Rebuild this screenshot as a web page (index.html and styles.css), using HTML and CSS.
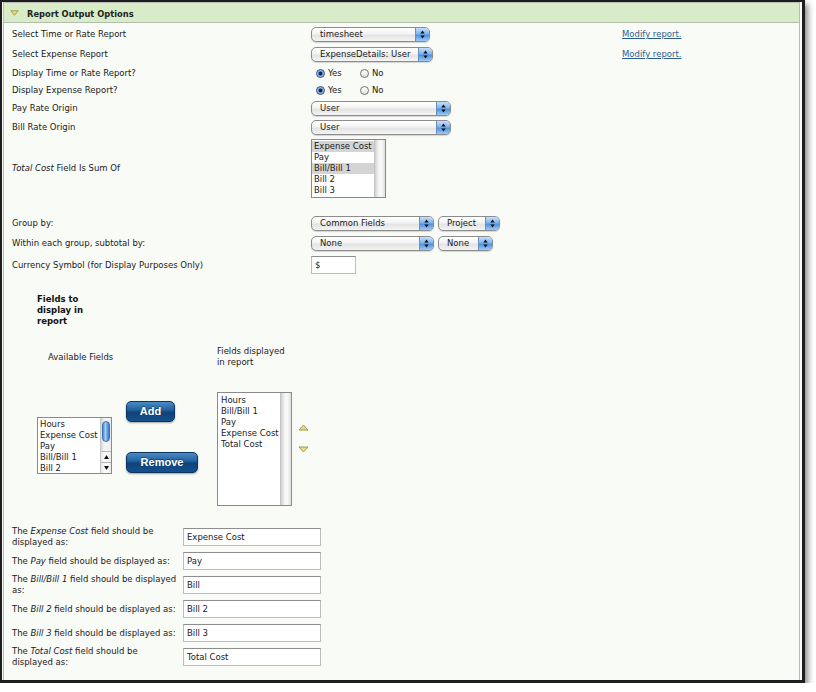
FILE: index.html
```html
<!DOCTYPE html>
<html>
<head>
<meta charset="utf-8">
<title>Report Output Options</title>
<link rel="stylesheet" href="styles.css">
</head>
<body>
<div class="frame">
  <div class="panel">
    <div class="hdr">
      <svg class="hdr-tri" width="9" height="6" viewBox="0 0 9 6"><path d="M0.8 0.8 L8.2 0.8 L4.5 5.2 Z" fill="#e6de8c" stroke="#a39a48" stroke-width="1" stroke-linejoin="round"/></svg>
      <span class="hdr-title">Report Output Options</span>
    </div>

    <div class="rows">
    <div class="row h21">
      <div class="lbl">Select Time or Rate Report</div>
      <div class="ctl">
        <div class="sel w119"><span class="sel-t">timesheet</span><span class="sel-a"><svg width="5" height="9" viewBox="0 0 5 9"><path d="M2.5 0.5 L4.7 3.5 L0.3 3.5Z M0.3 5.5 L4.7 5.5 L2.5 8.5Z" fill="#111"/></svg></span></div>
      </div>
      <a class="lnk" href="#">Modify report.</a>
    </div>

    <div class="row h19">
      <div class="lbl">Select Expense Report</div>
      <div class="ctl">
        <div class="sel w122"><span class="sel-t">ExpenseDetails: User</span><span class="sel-a"><svg width="5" height="9" viewBox="0 0 5 9"><path d="M2.5 0.5 L4.7 3.5 L0.3 3.5Z M0.3 5.5 L4.7 5.5 L2.5 8.5Z" fill="#111"/></svg></span></div>
      </div>
      <a class="lnk" href="#">Modify report.</a>
    </div>

    <div class="row h18">
      <div class="lbl">Display Time or Rate Report?</div>
      <div class="ctl radios">
        <span class="opt"><span class="rad on"></span>Yes</span>
        <span class="opt"><span class="rad"></span>No</span>
      </div>
    </div>

    <div class="row h17">
      <div class="lbl">Display Expense Report?</div>
      <div class="ctl radios">
        <span class="opt"><span class="rad on"></span>Yes</span>
        <span class="opt"><span class="rad"></span>No</span>
      </div>
    </div>

    <div class="row h18">
      <div class="lbl">Pay Rate Origin</div>
      <div class="ctl">
        <div class="sel w140"><span class="sel-t">User</span><span class="sel-a"><svg width="5" height="9" viewBox="0 0 5 9"><path d="M2.5 0.5 L4.7 3.5 L0.3 3.5Z M0.3 5.5 L4.7 5.5 L2.5 8.5Z" fill="#111"/></svg></span></div>
      </div>
    </div>

    <div class="row h21">
      <div class="lbl">Bill Rate Origin</div>
      <div class="ctl">
        <div class="sel w140"><span class="sel-t">User</span><span class="sel-a"><svg width="5" height="9" viewBox="0 0 5 9"><path d="M2.5 0.5 L4.7 3.5 L0.3 3.5Z M0.3 5.5 L4.7 5.5 L2.5 8.5Z" fill="#111"/></svg></span></div>
      </div>
    </div>

    <div class="row h60">
      <div class="lbl"><i>Total Cost</i> Field Is Sum Of</div>
      <div class="ctl">
        <div class="lb lb-sum">
          <div class="lb-items">
            <div class="lb-item hi">Expense Cost</div>
            <div class="lb-item">Pay</div>
            <div class="lb-item hi">Bill/Bill 1</div>
            <div class="lb-item">Bill 2</div>
            <div class="lb-item">Bill 3</div>
          </div>
          <div class="lb-track"></div>
        </div>
      </div>
    </div>

    <div class="row h20 gap-top">
      <div class="lbl">Group by:</div>
      <div class="ctl">
        <div class="sel w123"><span class="sel-t">Common Fields</span><span class="sel-a"><svg width="5" height="9" viewBox="0 0 5 9"><path d="M2.5 0.5 L4.7 3.5 L0.3 3.5Z M0.3 5.5 L4.7 5.5 L2.5 8.5Z" fill="#111"/></svg></span></div>
        <div class="sel w62 sel2"><span class="sel-t">Project</span><span class="sel-a"><svg width="5" height="9" viewBox="0 0 5 9"><path d="M2.5 0.5 L4.7 3.5 L0.3 3.5Z M0.3 5.5 L4.7 5.5 L2.5 8.5Z" fill="#111"/></svg></span></div>
      </div>
    </div>

    <div class="row h20">
      <div class="lbl">Within each group, subtotal by:</div>
      <div class="ctl">
        <div class="sel w123"><span class="sel-t">None</span><span class="sel-a"><svg width="5" height="9" viewBox="0 0 5 9"><path d="M2.5 0.5 L4.7 3.5 L0.3 3.5Z M0.3 5.5 L4.7 5.5 L2.5 8.5Z" fill="#111"/></svg></span></div>
        <div class="sel w55 sel2"><span class="sel-t">None</span><span class="sel-a"><svg width="5" height="9" viewBox="0 0 5 9"><path d="M2.5 0.5 L4.7 3.5 L0.3 3.5Z M0.3 5.5 L4.7 5.5 L2.5 8.5Z" fill="#111"/></svg></span></div>
      </div>
    </div>

    <div class="row h24">
      <div class="lbl">Currency Symbol (for Display Purposes Only)</div>
      <div class="ctl">
        <div class="txt w45">$</div>
      </div>
    </div>
    </div>

    <div class="fields">
      <div class="f-title">Fields to display in report</div>
      <div class="f-labels">
        <div class="f-avail-lbl">Available Fields</div>
        <div class="f-disp-lbl">Fields displayed in report</div>
      </div>
      <div class="f-lists">
        <div class="lb lb-avail">
          <div class="lb-items">
            <div class="lb-item">Hours</div>
            <div class="lb-item">Expense Cost</div>
            <div class="lb-item">Pay</div>
            <div class="lb-item">Bill/Bill 1</div>
            <div class="lb-item">Bill 2</div>
          </div>
          <div class="lb-vs">
            <div class="thumb"></div>
            <div class="vs-space"></div>
            <div class="vs-btn"><svg width="5" height="4" viewBox="0 0 5 4"><path d="M2.5 0 L5 4 L0 4Z" fill="#111"/></svg></div>
            <div class="vs-btn"><svg width="5" height="4" viewBox="0 0 5 4"><path d="M0 0 L5 0 L2.5 4Z" fill="#111"/></svg></div>
          </div>
        </div>
        <div class="f-btns">
          <div class="btn btn-add">Add</div>
          <div class="btn btn-remove">Remove</div>
        </div>
        <div class="lb lb-disp">
          <div class="lb-items">
            <div class="lb-item">Hours</div>
            <div class="lb-item">Bill/Bill 1</div>
            <div class="lb-item">Pay</div>
            <div class="lb-item">Expense Cost</div>
            <div class="lb-item">Total Cost</div>
          </div>
          <div class="lb-track"></div>
        </div>
        <div class="f-order">
          <svg class="ord-up" width="11" height="7" viewBox="0 0 11 7"><path d="M1 6 L5.5 1 L10 6 Z" fill="#e4dc8e" stroke="#a39a4a" stroke-width="1" stroke-linejoin="round"/></svg>
          <svg class="ord-down" width="11" height="7" viewBox="0 0 11 7"><path d="M1 1 L10 1 L5.5 6 Z" fill="#e4dc8e" stroke="#a39a4a" stroke-width="1" stroke-linejoin="round"/></svg>
        </div>
      </div>
    </div>

    <div class="names">
      <div class="br">
        <div class="br-lbl">The <i>Expense Cost</i> field should be<br>displayed as:</div>
        <div class="txt w138">Expense Cost</div>
      </div>
      <div class="br">
        <div class="br-lbl">The <i>Pay</i> field should be displayed as:</div>
        <div class="txt w138">Pay</div>
      </div>
      <div class="br">
        <div class="br-lbl">The <i>Bill/Bill 1</i> field should be displayed<br>as:</div>
        <div class="txt w138">Bill</div>
      </div>
      <div class="br">
        <div class="br-lbl">The <i>Bill 2</i> field should be displayed as:</div>
        <div class="txt w138">Bill 2</div>
      </div>
      <div class="br">
        <div class="br-lbl">The <i>Bill 3</i> field should be displayed as:</div>
        <div class="txt w138">Bill 3</div>
      </div>
      <div class="br">
        <div class="br-lbl">The <i>Total Cost</i> field should be<br>displayed as:</div>
        <div class="txt w138">Total Cost</div>
      </div>
    </div>
  </div>
</div>
</body>
</html>
```

FILE: styles.css
```css
body {
  margin: 0;
  background: #ffffff;
  font-family: "DejaVu Sans", Verdana, sans-serif;
  font-size: 8.5px;
  line-height: 11px;
  color: #1a1a1a;
}

.frame {
  width: 800px;
  height: 678px;
  border: 2px solid #1e1e1e;
  border-right-width: 3px;
  border-bottom-width: 3px;
  background: #f9fbf7;
  box-shadow: 3px 4px 6px rgba(0, 0, 0, 0.45);
  overflow: hidden;
}

.panel {
  margin-left: 1px;
  width: 797px;
  height: 678px;
  box-sizing: border-box;
  border: 1px solid #b9bcb5;
  border-bottom: none;
  background: #f9fbf7;
}

.hdr {
  height: 19px;
  background: #d9ecc8;
  border-bottom: 1px solid #b4bcae;
  display: flex;
  align-items: center;
}

.hdr-tri {
  margin-left: 6px;
  margin-top: 1px;
}

.hdr-title {
  margin-left: 8px;
  margin-top: 4px;
  font-weight: bold;
  font-size: 8.3px;
  color: #222;
}

.rows { padding-top: 1px; }

.row {
  display: flex;
  align-items: center;
}

.h17 { height: 17px; }
.h18 { height: 18px; }
.h19 { height: 19px; }
.h20 { height: 20px; }
.h21 { height: 21px; }
.h24 { height: 24px; }
.h60 { height: 60px; }
.gap-top { margin-top: 15px; }

.lbl {
  width: 307px;
  box-sizing: border-box;
  padding-left: 8px;
  white-space: nowrap;
}

.ctl {
  width: 311px;
  display: flex;
  align-items: center;
}

.lnk {
  color: #2b5d8c;
  text-decoration: underline;
}

/* Aqua style select */
.sel {
  display: flex;
  align-items: stretch;
  height: 15px;
  box-sizing: border-box;
  border: 1px solid #8c8c8c;
  border-radius: 5px;
  background: linear-gradient(#ffffff, #f3f3f3 45%, #e3e3e3 55%, #f4f4f4);
  box-shadow: 0 1px 1px rgba(0, 0, 0, 0.15);
  overflow: hidden;
}

.sel2 { margin-left: 4px; }

.sel-t {
  flex: 1;
  padding-left: 8px;
  white-space: nowrap;
  overflow: hidden;
  line-height: 13px;
  color: #1a1a1a;
}

.sel-a {
  width: 13px;
  border-left: 1px solid #6b8fbd;
  background: linear-gradient(#c6e0f9, #7eb3ee 45%, #4f92e0 55%, #9ccaf5);
  display: flex;
  align-items: center;
  justify-content: center;
}

.w55 { width: 55px; }
.w62 { width: 62px; }
.w119 { width: 119px; }
.w122 { width: 122px; }
.w123 { width: 123px; }
.w140 { width: 140px; }

/* radios */
.radios { padding-left: 5px; }

.opt {
  display: flex;
  align-items: center;
  width: 44px;
}

.rad {
  width: 9px;
  height: 9px;
  box-sizing: border-box;
  border-radius: 50%;
  border: 1px solid #707070;
  background: linear-gradient(#ffffff, #e2e2e2);
  margin-right: 3px;
}

.rad.on {
  border-color: #2f4d78;
  background: radial-gradient(circle, #15284a 0, #15284a 1.6px, #6f9bd4 2.2px, #bcd6f3 4px);
}

/* text inputs */
.txt {
  height: 18px;
  box-sizing: border-box;
  border: 1px solid #bcbcbc;
  border-top-color: #8e8e8e;
  background: #ffffff;
  padding-left: 3px;
  line-height: 16px;
  color: #1a1a1a;
}

.w45 { width: 45px; }
.w138 { width: 138px; }

/* list boxes */
.lb {
  display: flex;
  width: 75px;
  box-sizing: border-box;
  border: 1px solid #8a8a8a;
  background: #ffffff;
  overflow: hidden;
}

.lb-items {
  flex: 1;
  min-width: 0;
  padding-top: 1px;
  overflow: hidden;
}

.lb-item {
  line-height: 11px;
  padding-left: 2px;
  white-space: nowrap;
  color: #1a1a1a;
}

.lb-item.hi { background: #d4d4d4; }

.lb-track {
  width: 10px;
  border-left: 1px solid #c4c4c4;
  background: linear-gradient(to right, #d0d0d0, #f2f2f2 35%, #fafafa 60%, #e0e0e0);
}

.lb-sum { height: 59px; }
.lb-avail { height: 57px; margin-top: 25px; }
.lb-avail .lb-item { padding-left: 2px; }
.lb-disp { height: 114px; }
.lb-disp .lb-items { padding-top: 2px; }
.lb-disp .lb-item { padding-left: 3px; }

.lb-vs {
  width: 10px;
  border-left: 1px solid #c4c4c4;
  display: flex;
  flex-direction: column;
  background: linear-gradient(to right, #dadada, #f6f6f6 40%, #ececec);
}

.thumb {
  margin: 3px 1px 0 1px;
  height: 19px;
  border-radius: 4px;
  border: 1px solid #3f6fae;
  background: linear-gradient(to right, #4d86d2, #a8d0f7 40%, #6ea9ec 65%, #3a78cc);
}

.vs-space { flex: 1; }

.vs-btn {
  height: 10px;
  border-top: 1px solid #b5b5b5;
  background: linear-gradient(to right, #e8e8e8, #ffffff 50%, #e8e8e8);
  display: flex;
  align-items: center;
  justify-content: center;
}

/* fields section */
.fields { padding-left: 33px; }

.f-title {
  margin-top: 17px;
  width: 50px;
  font-weight: bold;
  color: #111;
}

.f-labels {
  display: flex;
  align-items: center;
  margin-top: 19px;
}

.f-avail-lbl {
  width: 169px;
  padding-left: 11px;
}

.f-disp-lbl { width: 72px; }

.f-lists {
  display: flex;
  align-items: flex-start;
  margin-top: 24px;
}

.f-btns {
  width: 105px;
  padding-left: 14px;
  box-sizing: border-box;
  display: flex;
  flex-direction: column;
  align-items: flex-start;
  margin-top: 9px;
}

.btn {
  height: 21px;
  box-sizing: border-box;
  border: 1px solid #0b3560;
  border-radius: 5px;
  background: linear-gradient(#4c8ac3, #2363a0 40%, #0f4379 55%, #15518d);
  box-shadow: 0 1px 2px rgba(0, 0, 0, 0.35);
  color: #ffffff;
  font-family: "Liberation Sans", Arial, sans-serif;
  font-weight: bold;
  font-size: 11px;
  line-height: 19px;
  text-align: center;
  text-shadow: 0 -1px 0 rgba(0, 0, 0, 0.4);
}

.btn-add { width: 49px; }
.btn-remove { width: 72px; margin-top: 30px; }

.f-order {
  display: flex;
  flex-direction: column;
  margin-left: 6px;
  margin-top: 32px;
}

.ord-down { margin-top: 15px; }

/* display names */
.names { margin-top: 19px; }

.br {
  display: flex;
  align-items: center;
  height: 24px;
}

.br-lbl {
  width: 179px;
  box-sizing: border-box;
  padding-left: 8px;
  padding-right: 2px;
  line-height: 11px;
  white-space: nowrap;
}
```
